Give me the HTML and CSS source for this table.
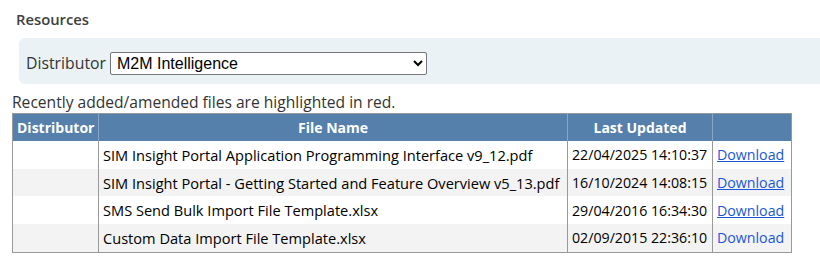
FILE: index.html
```html
<!DOCTYPE html>
<html>
<head>
<meta charset="utf-8">
<link rel="stylesheet" href="styles.css">
</head>
<body>
<div class="page">
  <h2 class="title">Resources</h2>
  <div class="filter-panel">
    <label class="filter-label" for="dist">Distributor</label>
    <select id="dist" class="filter-select">
      <option>M2M Intelligence</option>
    </select>
  </div>
  <p class="note">Recently added/amended files are highlighted in red.</p>
  <table class="files">
    <colgroup>
      <col class="c-dist">
      <col class="c-name">
      <col class="c-date">
      <col class="c-dl">
    </colgroup>
    <thead>
      <tr>
        <th>Distributor</th>
        <th>File Name</th>
        <th>Last Updated</th>
        <th></th>
      </tr>
    </thead>
    <tbody>
      <tr>
        <td></td>
        <td>SIM Insight Portal Application Programming Interface v9_12.pdf</td>
        <td class="date">22/04/2025 14:10:37</td>
        <td class="date"><a href="#" class="dl">Download</a></td>
      </tr>
      <tr class="alt">
        <td></td>
        <td>SIM Insight Portal - Getting Started and Feature Overview v5_13.pdf</td>
        <td class="date">16/10/2024 14:08:15</td>
        <td class="date"><a href="#" class="dl">Download</a></td>
      </tr>
      <tr>
        <td></td>
        <td>SMS Send Bulk Import File Template.xlsx</td>
        <td class="date">29/04/2016 16:34:30</td>
        <td class="date"><a href="#" class="dl">Download</a></td>
      </tr>
      <tr class="alt">
        <td></td>
        <td>Custom Data Import File Template.xlsx</td>
        <td class="date">02/09/2015 22:36:10</td>
        <td class="date"><a href="#" class="dl dl-plain">Download</a></td>
      </tr>
    </tbody>
  </table>
</div>
</body>
</html>
```

FILE: styles.css
```css
html, body {
  margin: 0;
  padding: 0;
  background: #ffffff;
}
body {
  font-family: "Open Sans", "Noto Sans", sans-serif;
  color: #333333;
  overflow: hidden;
}
.page {
  padding: 9px 0 0 0;
}
.title {
  margin: 0 0 0 16px;
  font-size: 14.8px;
  font-weight: 600;
  color: #404040;
  line-height: 20px;
}
.filter-panel {
  margin: 9px 0 0 19px;
  background: #eaf2f5;
  border-radius: 6px 0 0 6px;
  height: 46px;
  display: flex;
  align-items: center;
  padding-left: 7px;
  padding-top: 4px;
  box-sizing: border-box;
  gap: 4px;
}
.filter-label {
  font-size: 15.8px;
  color: #333333;
}
.filter-select {
  width: 317px;
  height: 23px;
  font-family: "Liberation Sans", Arial, sans-serif;
  font-size: 16px;
  color: #000000;
  border: 1px solid #767676;
  border-radius: 2px;
  background: #ffffff;
  padding: 0 2px;
}
.note {
  margin: 9px 0 0 12px;
  font-size: 15.6px;
  line-height: 19px;
  color: #333333;
}
.files {
  margin: 1px 0 0 12px;
  border-collapse: collapse;
  table-layout: fixed;
  width: 779px;
  border: 1px solid #999999;
  font-size: 14.6px;
  color: #000000;
}
.c-dist { width: 86px; }
.c-name { width: 469px; }
.c-date { width: 145px; }
.c-dl { width: 79px; }
.files th {
  background: #5580ab;
  color: #ffffff;
  font-weight: 700;
  font-size: 14px;
  height: 27px;
  padding: 0 4px;
  border-left: 1px solid #8aa6c4;
  text-align: center;
}
.files th:first-child { border-left: none; }
.files td {
  height: 27.7px;
  padding: 0 4px;
  border-left: 1px solid #999999;
  white-space: nowrap;
  overflow: hidden;
}
.files td.date { font-size: 14.2px; }
.files tr.alt td { background: #f3f3f3; }
.dl {
  color: #1a56db;
  text-decoration: underline;
}
.dl-plain { text-decoration: none; }
```
